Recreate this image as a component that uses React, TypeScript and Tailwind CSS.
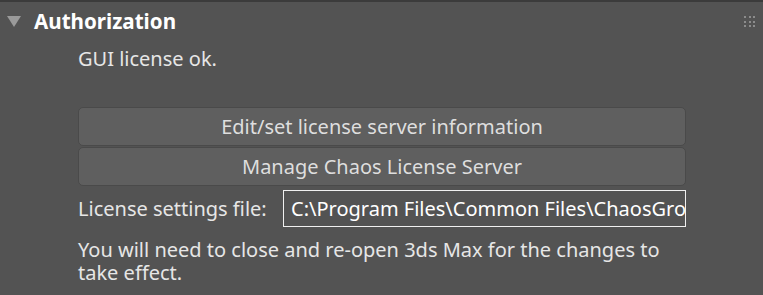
export default function App() {
  return (
    <div
      className="flex h-[295px] w-[763px] flex-col border-t-2 border-[#3b3b3b] bg-[#535353] text-[#e6e6e6]"
      style={{ fontFamily: '"Noto Sans", "Open Sans", sans-serif' }}
    >
      {/* rollout header */}
      <div className="flex h-[38px] items-center justify-between pl-[7px] pr-[8px]">
        <div className="flex items-center gap-[13px]">
          <svg width="14" height="11" viewBox="0 0 14 11">
            <polygon points="0,0 14,0 7,11" fill="#9a9a9a" />
          </svg>
          <span className="text-[20.6px] font-bold leading-none text-white">Authorization</span>
        </div>
        <div className="mt-[1px] grid grid-cols-3 gap-x-[2.3px] gap-y-[2.3px]">
          {Array.from({ length: 9 }).map((_, i) => (
            <span key={i} className="h-[2px] w-[2px] bg-[#8c8c8c]" />
          ))}
        </div>
      </div>

      <div className="flex flex-col pl-[78px] pr-[77px] text-[20px]">
        <p className="mt-[7px] leading-[24px]">GUI license ok.</p>

        <div className="mt-[36px] flex flex-col gap-[1px]">
          <button className="h-[39px] rounded-[5px] border border-[#4a4a4a] bg-[#5f5f5f] text-[#dedede]">
            Edit/set license server information
          </button>
          <button className="h-[39px] rounded-[5px] border border-[#4a4a4a] bg-[#5f5f5f] text-[#dedede]">
            Manage Chaos License Server
          </button>
        </div>

        <div className="mt-[4px] flex items-center">
          <span className="w-[205px] shrink-0">License settings file:</span>
          <div className="h-[37px] flex-1 overflow-hidden whitespace-nowrap border border-[#f0f0f0] pl-[7px] leading-[35px] text-white">
            C:\Program Files\Common Files\ChaosGro
          </div>
        </div>

        <p className="mt-[11px] leading-[23px]">
          You will need to close and re-open 3ds Max for the changes to take effect.
        </p>
      </div>
    </div>
  );
}
